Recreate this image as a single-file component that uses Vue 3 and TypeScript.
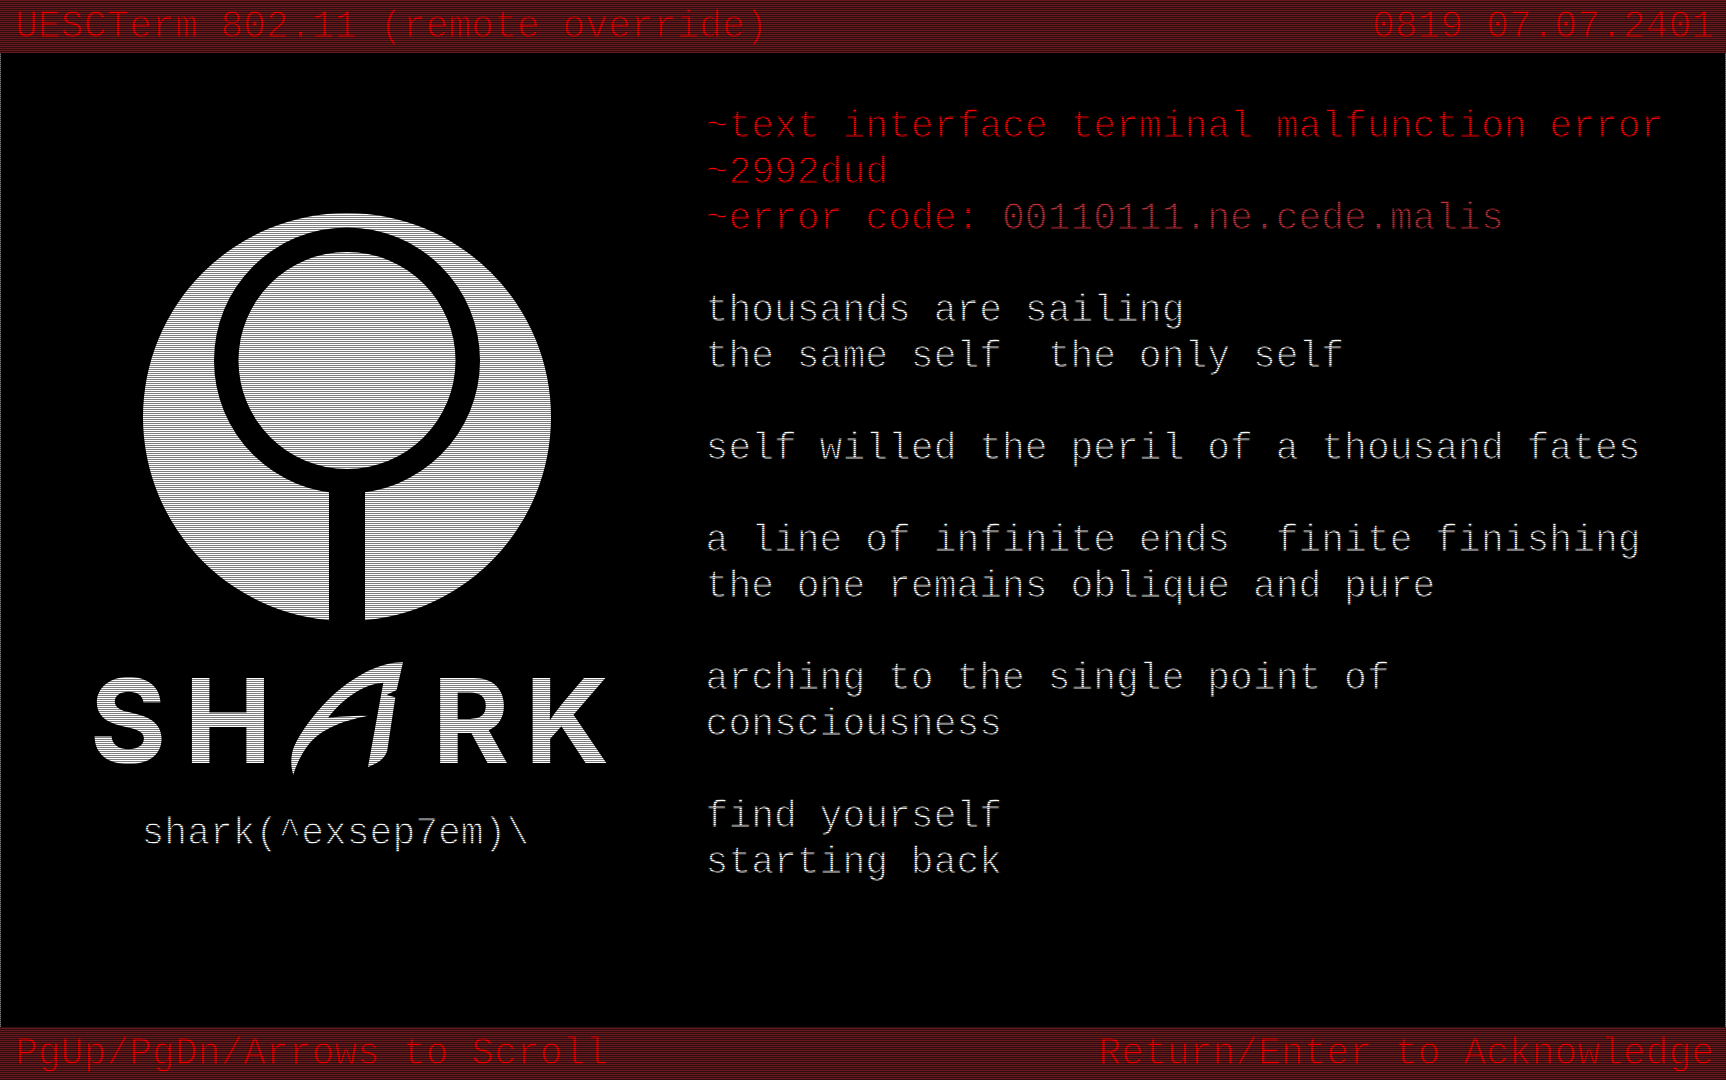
<script setup lang="ts">
interface Segment {
  text: string
  tone: 'alert' | 'faded'
}

const alerts: Segment[][] = [
  [{ text: '~text interface terminal malfunction error', tone: 'alert' }],
  [{ text: '~2992dud', tone: 'alert' }],
  [
    { text: '~error code: ', tone: 'alert' },
    { text: '00110111.ne.cede.malis', tone: 'faded' },
  ],
]

const stanzas: string[] = [
  'thousands are sailing\nthe same self  the only self',
  'self willed the peril of a thousand fates',
  'a line of infinite ends  finite finishing\nthe one remains oblique and pure',
  'arching to the single point of\nconsciousness',
  'find yourself\nstarting back',
]

const login = 'shark(^exsep7em)\\ '
</script>

<template>
  <div class="terminal">
    <header class="bar">
      <span>UESCTerm 802.11 (remote override)</span>
      <time>0819 07.07.2401</time>
    </header>

    <main class="screen">
      <figure class="ident">
        <svg class="logo" viewBox="78 213 538 586" role="img" aria-label="Shark">
          <circle cx="347" cy="417" r="204" fill="#fff" />
          <circle cx="347" cy="360.5" r="133" fill="#000" />
          <rect x="329" y="480" width="36" height="145" fill="#000" />
          <circle cx="347" cy="360.5" r="108.5" fill="#fff" />
          <g class="wordmark">
            <text x="128" y="763">S</text>
            <text x="228" y="763">H</text>
            <text x="471" y="763">R</text>
            <text x="567" y="763">K</text>
          </g>
          <path
            class="fin"
            transform="translate(280 640) scale(.3333)"
            d="M369 67C300 67 230 105 165 160C110 210 62 275 42 320C30 350 33 385 40 404C50 370 68 335 90 308C125 270 175 245 264 227C230 227 190 228 144 233C190 175 250 132 310 128L264 381C300 368 318 350 322 330L346 172L320 165L350 150Z"
          />
        </svg>
        <figcaption class="login">{{ login }}</figcaption>
      </figure>

      <article class="message">
        <p>
          <span v-for="(line, i) in alerts" :key="i" class="line">
            <span v-for="part in line" :key="part.text" :class="part.tone">{{ part.text }}</span>
          </span>
        </p>
        <p v-for="stanza in stanzas" :key="stanza">{{ stanza }}</p>
      </article>
    </main>

    <footer class="bar">
      <span>PgUp/PgDn/Arrows to Scroll</span>
      <span>Return/Enter to Acknowledge</span>
    </footer>

    <div class="scanlines" aria-hidden="true"></div>
  </div>
</template>

<style>
body {
  margin: 0;
  background: #000;
}
</style>

<style scoped>
.terminal {
  position: relative;
  display: flex;
  flex-direction: column;
  min-height: 100vh;
  background: #000;
  color: #fff;
  font-family: "Courier New", "Liberation Mono", monospace;
  font-size: 38px;
  line-height: 46px;
  -webkit-text-stroke: 1px #000;
}

.bar {
  display: flex;
  justify-content: space-between;
  align-items: flex-start;
  box-sizing: border-box;
  height: 53px;
  padding: 4px 12px 0 15px;
  background: #64191d;
  color: #f00;
  -webkit-text-stroke-color: #64191d;
}

.screen {
  display: grid;
  grid-template-columns: 2fr 3fr;
  flex: 1;
  border: solid #777;
  border-width: 0 1px;
}

.ident {
  display: flex;
  flex-direction: column;
  align-items: center;
  gap: 12px;
  margin: 0;
  padding: 160px 0 0 2px;
}

.logo {
  display: block;
  width: 80%;
  max-width: 538px;
}

.wordmark {
  fill: #fff;
  font-family: Inter, "Liberation Sans", sans-serif;
  font-size: 117px;
  font-weight: 700;
  text-anchor: middle;
  -webkit-text-stroke: 0;
}

.fin {
  fill: #fff;
}

.login {
  white-space: pre;
}

.message {
  display: flex;
  flex-direction: column;
  gap: 46px;
  min-width: 0;
  padding: 51px 0 46px 15px;
}

.message p {
  margin: 0;
  white-space: pre-wrap;
}

.line {
  display: block;
}

.alert {
  color: #f00;
}

.faded {
  color: #c03038;
}

.scanlines {
  position: absolute;
  inset: 0;
  pointer-events: none;
  background: repeating-linear-gradient(
    to bottom,
    transparent 0 1px,
    rgba(0, 0, 0, 0.5) 1px 2px
  );
}
</style>
